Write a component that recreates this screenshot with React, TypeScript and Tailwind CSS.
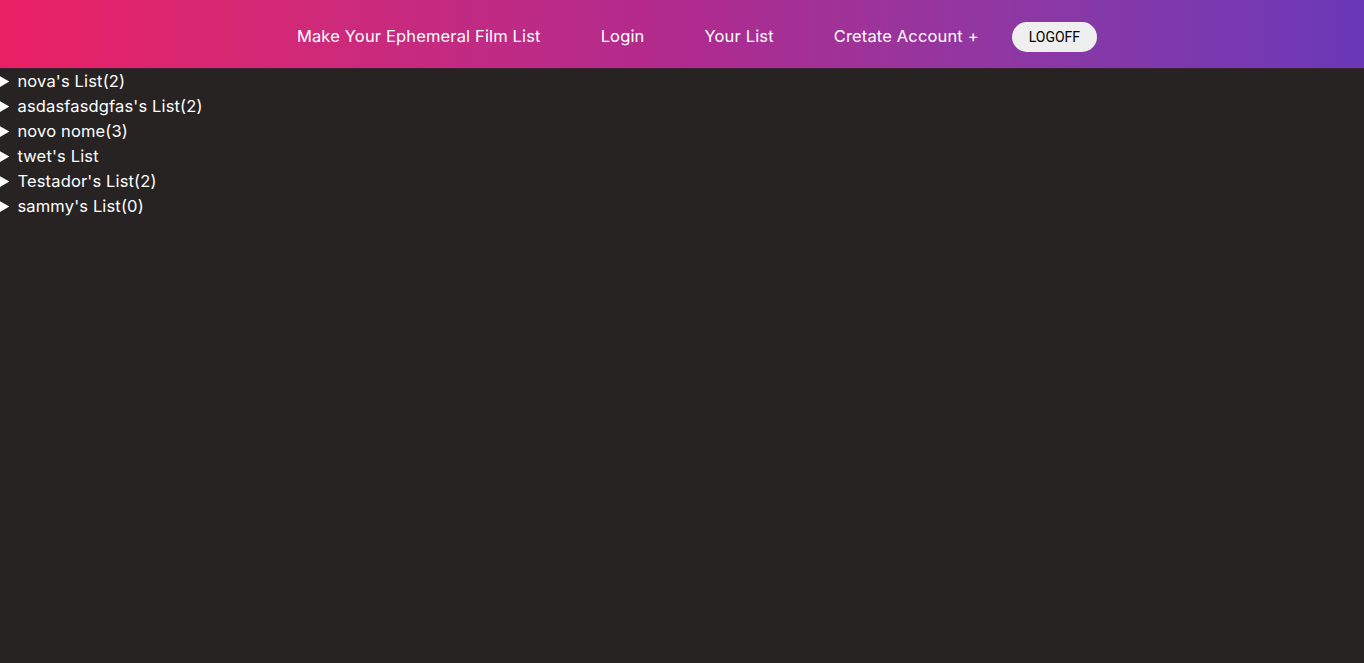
import React from "react";

const lists = [
  "nova's List(2)",
  "asdasfasdgfas's List(2)",
  "novo nome(3)",
  "twet's List",
  "Testador's List(2)",
  "sammy's List(0)",
];

export default function App() {
  return (
    <div className="min-h-[663px] bg-[#272323] text-white" style={{ fontFamily: "Inter, 'Open Sans', sans-serif" }}>
      <header className="h-[68px] bg-gradient-to-r from-[#ea1f63] via-[#b02a8e] to-[#6a38b8] flex items-center justify-center pt-[4px]">
        <nav className="flex items-center text-[16.5px] tracking-[0.15px] text-white">
          <a className="mx-[30px]">Make Your Ephemeral Film List</a>
          <a className="mx-[30px]">Login</a>
          <a className="mx-[30px]">Your List</a>
          <a className="mx-[30px]">Cretate Account +</a>
          <button className="ml-[3px] mt-[2px] h-[30px] px-[17px] rounded-[15px] bg-[#efefef] text-black text-[14px] tracking-normal" style={{ fontFamily: "Roboto, 'Liberation Sans', sans-serif" }}>
            LOGOFF
          </button>
        </nav>
      </header>
      <div className="border-t border-[#3a2030]" />
      <div>
        {lists.map((l) => (
          <details key={l} className="text-[16.5px] tracking-[0.15px] leading-[25px]">
            <summary className="cursor-pointer">{l}</summary>
          </details>
        ))}
      </div>
    </div>
  );
}
